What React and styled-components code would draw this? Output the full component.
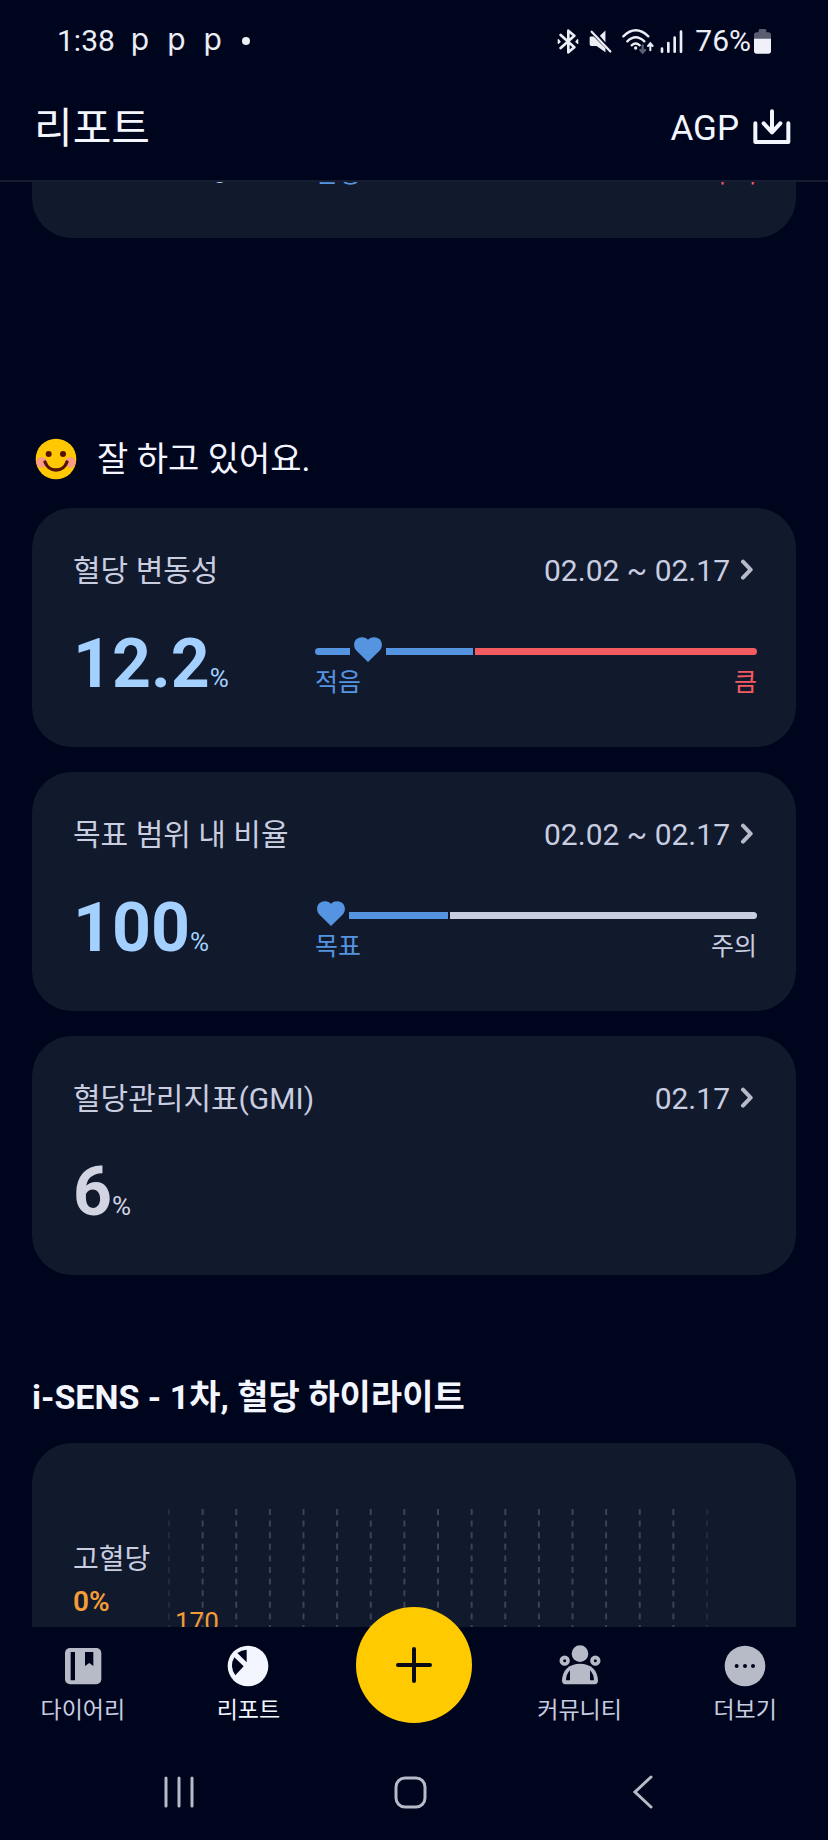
import React, { useLayoutEffect, useRef } from "react";
import styled, { createGlobalStyle } from "styled-components";

const colors = {
	page: "#00051e",
	card: "#11192c",
	line: "#161d30",
	white: "#f4f6ff",
	text: "#c9cde0",
	muted: "#b7bac7",
	blue: "#5594e0",
	sky: "#a3d0ff",
	red: "#f45b60",
	orange: "#f39c38",
	yellow: "#ffcb00",
};

const average = {
	value: "100",
	unit: "mg/dL",
	good: true,
	range: { before: 62, after: 60, rest: 282, low: "안정", high: "주의", tone: colors.red },
};

const metrics = [
	{
		title: "혈당 변동성",
		date: "02.02 ~ 02.17",
		value: "12.2",
		unit: "%",
		good: true,
		range: { before: 35, after: 87, rest: 282, low: "적음", high: "큼", tone: colors.red },
	},
	{
		title: "목표 범위 내 비율",
		date: "02.02 ~ 02.17",
		value: "100",
		unit: "%",
		good: true,
		range: { before: 0, after: 99, rest: 309, low: "목표", high: "주의", tone: colors.text },
	},
	{ title: "혈당관리지표(GMI)", date: "02.17", value: "6", unit: "%" },
];

const GRID_LINES = 17;

function StatusIcons() {
	return (
		<>
			<svg width="22" height="25" viewBox="0 0 66 75" fill="none" stroke="#eceef6" strokeWidth="8" strokeLinejoin="round" strokeLinecap="round">
				<path d="M11 18 52 55 34 70V5L52 20 11 57" />
				<path d="M4 32v11l5-5zM62 32v11l-5-5z" strokeWidth="4" fill="#eceef6" />
			</svg>
			<svg width="23" height="25" viewBox="0 0 70 75" fill="#eceef6">
				<path d="M33 20 50 4v36zM4 22h10l36 36v12L23 51H7q-5 0-5-5V27q0-4 2-5z" />
				<path d="M8 8 65 68" stroke="#eceef6" strokeWidth="7" strokeLinecap="round" />
			</svg>
			<svg width="61" height="25" viewBox="0 0 183 75" fill="none" stroke="#eceef6" strokeWidth="7" strokeLinecap="round">
				<path d="M4 22Q41-14 79 22M16 37Q41 12 67 37M29 49q12-11 24 0" />
				<circle cx="41" cy="57" r="5" fill="#eceef6" stroke="none" />
				<path d="M62 49v21m-7-7 7 8 7-8" stroke="#5a5e72" />
				<path d="M85 64V44m-7 7 7-8 7 8" strokeWidth="6" />
				<path d="M120 59v9M139 42v26M158 26v42M177 8v60" strokeWidth="8" />
			</svg>
		</>
	);
}

function Battery() {
	return (
		<svg width="17" height="25" viewBox="0 0 51 75">
			<path d="M14 10V4q0-4 4-4h15q4 0 4 4v6h6q8 0 8 8v12H0V18q0-8 8-8z" fill="#5a5d70" />
			<path d="M0 29h51v37q0 8-8 8H8q-8 0-8-8z" fill="#f0f1f8" />
		</svg>
	);
}

function DownloadIcon() {
	return (
		<svg width="38" height="38" viewBox="0 0 114 114" fill="none" stroke={colors.white} strokeWidth="12" strokeLinecap="round" strokeLinejoin="round">
			<path d="M7 43v56h99V43M57 7v62M32 43l25 27 25-27" />
		</svg>
	);
}

function Smile() {
	return (
		<svg width="42" height="42" viewBox="0 0 126 126">
			<clipPath id="face">
				<circle cx="63" cy="63" r="61" />
			</clipPath>
			<g clipPath="url(#face)">
				<rect width="126" height="126" fill="#ffc803" />
				<circle cx="20" cy="73" r="16" fill="#fb9a86" />
				<circle cx="106" cy="73" r="16" fill="#fb9a86" />
			</g>
			<circle cx="41" cy="48" r="9" fill="#551309" />
			<circle cx="84" cy="48" r="9" fill="#551309" />
			<path d="M30 72c12 32 54 32 66 0" fill="none" stroke="#551309" strokeWidth="10" strokeLinecap="round" />
		</svg>
	);
}

function Chevron() {
	return (
		<svg width="14" height="24" viewBox="0 0 42 72" fill="none" stroke={colors.muted} strokeWidth="12" strokeLinecap="round" strokeLinejoin="round">
			<path d="M9 8 32 32 9 56" />
		</svg>
	);
}

function RangeBar({ before, after, rest, low, high, tone }) {
	return (
		<Range>
			<Track>
				{before > 0 && <Segment $size={before} $tone={colors.blue} $first />}
				<Heart viewBox="0 0 86 88">
					<path d="M43 76 7 41C-6 27 0 0 24 0c10 0 16 4 19 8 3-4 9-8 19-8 24 0 30 27 17 41z" fill={colors.blue} />
				</Heart>
				<Segment $size={after} $tone={colors.blue} />
				<Segment $size={rest} $tone={tone} $last />
			</Track>
			<RangeLabels>
				<RangeLabel $tone={colors.blue}>{low}</RangeLabel>
				<RangeLabel $tone={tone}>{high}</RangeLabel>
			</RangeLabels>
		</Range>
	);
}

function MetricCard({ title, date, value, unit, good, range }) {
	return (
		<Card>
			{title && (
				<CardHead>
					<CardTitle>{title}</CardTitle>
					<DateButton type="button">
						{date}
						<Chevron />
					</DateButton>
				</CardHead>
			)}
			<CardBody>
				<Value $good={good}>
					{value}
					<Unit>{unit}</Unit>
				</Value>
				{range && <RangeBar {...range} />}
			</CardBody>
		</Card>
	);
}

function HighlightChart() {
	const lines = [];
	for (let i = 0; i < GRID_LINES; i++) {
		lines.push(`${(i * 100) / (GRID_LINES - 1)}%`);
	}

	return (
		<Chart>
			{lines.map((x, i) => (
				<line
					key={x}
					x1={x}
					x2={x}
					y1="0"
					y2="100%"
					stroke="#3c4354"
					strokeWidth="2"
					strokeDasharray="6 5.6"
					opacity={i === 0 || i === GRID_LINES - 1 ? 0.4 : 1}
				/>
			))}
			<ChartLabel x="6" y="122">
				170
			</ChartLabel>
		</Chart>
	);
}

function DiaryIcon() {
	return (
		<svg width="42" height="42" viewBox="0 0 126 126" fill={colors.muted}>
			<rect x="9" y="9" width="109" height="109" rx="15" />
			<path d="M26 21h13v85H26zM69 21h25v42l-12-9-13 9z" fill={colors.page} />
		</svg>
	);
}

function ReportIcon() {
	return (
		<svg width="42" height="42" viewBox="0 0 126 126" fill={colors.white}>
			<circle cx="63" cy="63" r="61" />
			<path d="M59 14v38L31 24q12-9 28-10zM22 37l28 27-25 27Q6 64 22 37z" fill={colors.page} />
		</svg>
	);
}

function CommunityIcon() {
	return (
		<svg width="42" height="42" viewBox="0 0 126 126" fill={colors.muted}>
			<circle cx="63" cy="26" r="25" />
			<circle cx="17" cy="47" r="10" fill="none" stroke={colors.muted} strokeWidth="11" />
			<circle cx="109" cy="47" r="10" fill="none" stroke={colors.muted} strokeWidth="11" />
			<path d="M9 106c1-31 22-50 54-50s53 19 54 50q0 12-10 12H19q-10 0-10-12z" />
			<path d="M33 76q-12 12-12 30h12zM93 76q12 12 12 30H93z" fill={colors.page} />
		</svg>
	);
}

function MoreIcon() {
	return (
		<svg width="42" height="42" viewBox="0 0 126 126" fill={colors.muted}>
			<circle cx="63" cy="63" r="61" />
			<g fill={colors.page}>
				<circle cx="38" cy="63" r="6" />
				<circle cx="63" cy="63" r="6" />
				<circle cx="87" cy="63" r="6" />
			</g>
		</svg>
	);
}

function App() {
	const scroller = useRef(null);

	useLayoutEffect(() => {
		scroller.current.scrollTop = 111;
	}, []);

	return (
		<Screen>
			<GlobalStyle />
			<StatusBar>
				<StatusGroup>
					<span>1:38</span>
					<Notices>
						<span>p</span>
						<span>p</span>
						<span>p</span>
					</Notices>
					<Dot />
				</StatusGroup>
				<StatusGroup>
					<StatusSymbols>
						<StatusIcons />
					</StatusSymbols>
					<BatteryLevel>
						76%
						<Battery />
					</BatteryLevel>
				</StatusGroup>
			</StatusBar>

			<Header>
				<PageTitle>리포트</PageTitle>
				<AgpButton type="button">
					AGP
					<DownloadIcon />
				</AgpButton>
			</Header>

			<Content ref={scroller}>
				<MetricCard {...average} />

				<Praise>
					<Smile />
					잘 하고 있어요.
				</Praise>
				<CardList>
					{metrics.map((metric) => (
						<MetricCard key={metric.title} {...metric} />
					))}
				</CardList>

				<HighlightTitle>i-SENS - 1차, 혈당 하이라이트</HighlightTitle>
				<HighlightCard>
					<Level>
						<span>고혈당</span>
						<LevelValue>0%</LevelValue>
					</Level>
					<HighlightChart />
				</HighlightCard>
			</Content>

			<TabBar>
				<Tab href="#diary">
					<DiaryIcon />
					다이어리
				</Tab>
				<Tab href="#report" $active>
					<ReportIcon />
					리포트
				</Tab>
				<AddButton type="button" aria-label="추가">
					<svg width="38" height="38" viewBox="0 0 38 38" stroke="#080a14" strokeWidth="4" strokeLinecap="round">
						<path d="M19 3v32M3 19h32" />
					</svg>
				</AddButton>
				<Tab href="#community">
					<CommunityIcon />
					커뮤니티
				</Tab>
				<Tab href="#more">
					<MoreIcon />
					더보기
				</Tab>
			</TabBar>

			<SystemBar>
				<SystemButton type="button" aria-label="최근 앱">
					<svg width="34" height="34" viewBox="0 0 34 34">
						<path d="M5 3v28M18 3v28M31 3v28" />
					</svg>
				</SystemButton>
				<SystemButton type="button" aria-label="홈">
					<svg width="34" height="34" viewBox="0 0 34 34">
						<rect x="3" y="3" width="29" height="29" rx="9" />
					</svg>
				</SystemButton>
				<SystemButton type="button" aria-label="뒤로">
					<svg width="34" height="34" viewBox="0 0 34 34">
						<path d="M25 2 9 17l16 15" />
					</svg>
				</SystemButton>
			</SystemBar>
		</Screen>
	);
}

export default App;

const GlobalStyle = createGlobalStyle`
	* {
		box-sizing: border-box;
	}

	body {
		margin: 0;
		background: ${colors.page};
		color: ${colors.text};
		font-family: Roboto, "Noto Sans CJK KR", sans-serif;
	}

	button {
		padding: 0;
		border: none;
		background: none;
		color: inherit;
		font: inherit;
		cursor: pointer;
	}

	svg {
		display: block;
		flex: none;
	}
`;

const Screen = styled.div`
	display: flex;
	flex-direction: column;
	height: 100vh;
	background: ${colors.page};
`;

const StatusBar = styled.div`
	display: flex;
	justify-content: space-between;
	padding: 20px 57px 16px;
	font-size: 30px;
	line-height: 42px;
	color: #eceef6;
`;

const StatusGroup = styled.div`
	display: flex;
	align-items: center;
`;

const Notices = styled.div`
	display: flex;
	gap: 18px;
	margin-left: 16px;
	padding-bottom: 5px;
	font-family: Inter, sans-serif;
	line-height: 36px;
`;

const Dot = styled.i`
	width: 8px;
	height: 8px;
	margin-left: 20px;
	border-radius: 50%;
	background: #eceef6;
`;

const StatusSymbols = styled.div`
	display: flex;
	gap: 10px;
	margin-right: 12px;
`;

const BatteryLevel = styled.div`
	display: flex;
	align-items: center;
	gap: 3px;
`;

const Header = styled.header`
	display: flex;
	align-items: center;
	justify-content: space-between;
	height: 104px;
	padding: 0 37px 2px 34px;
	border-bottom: 2px solid ${colors.line};
	color: ${colors.white};
`;

const PageTitle = styled.h1`
	margin: 0;
	padding-top: 2px;
	font-size: 42px;
	font-weight: 400;
	line-height: 48px;
`;

const AgpButton = styled.button`
	display: flex;
	align-items: center;
	gap: 14px;
	&& {
		font-size: 35px;
	}
`;

const Content = styled.main`
	flex: 1;
	min-height: 0;
	padding: 0 32px;
	overflow-y: auto;
	scrollbar-width: none;
`;

const Card = styled.section`
	padding: 43px 39px 42px 41px;
	border-radius: 40px;
	background: ${colors.card};
`;

const CardHead = styled.div`
	display: flex;
	align-items: center;
	justify-content: space-between;
	margin-bottom: 32px;
	font-size: 30px;
	line-height: 40px;
`;

const CardTitle = styled.h3`
	margin: 0;
	font-size: inherit;
	font-weight: 400;
`;

const DateButton = styled.button`
	display: flex;
	align-items: center;
	gap: 10px;
	padding-right: 3px;
`;

const CardBody = styled.div`
	display: grid;
	grid-template-columns: 242px 1fr;
	align-items: end;
`;

const Value = styled.p`
	margin: 0;
	font-size: 68px;
	font-weight: 700;
	line-height: 82px;
	color: ${(props) => (props.$good ? colors.sky : "#d2d4e2")};
`;

const Unit = styled.span`
	font-size: 26px;
	font-weight: 400;
	line-height: 32px;
`;

const Range = styled.div`
	display: flex;
	flex-direction: column;
	gap: 1px;
	padding-bottom: 6px;
`;

const Track = styled.div`
	display: flex;
	align-items: center;
	gap: 2px;
	height: 29px;
`;

const Segment = styled.i`
	flex: ${(props) => props.$size} 1 0;
	height: 7px;
	background: ${(props) => props.$tone};
	border-radius: ${(props) => (props.$first ? "4px 0 0 4px" : props.$last ? "0 4px 4px 0" : "0")};
`;

const Heart = styled.svg`
	width: 32px;
	height: 29px;
	padding: 0 2px;
`;

const RangeLabels = styled.div`
	display: flex;
	justify-content: space-between;
	font-size: 25px;
	line-height: 32px;
`;

const RangeLabel = styled.span`
	color: ${(props) => props.$tone};
`;

const Praise = styled.h2`
	display: flex;
	align-items: center;
	gap: 20px;
	margin: 197px 0 25px 3px;
	font-size: 34px;
	font-weight: 400;
	line-height: 48px;
	color: ${colors.white};
`;

const CardList = styled.div`
	display: flex;
	flex-direction: column;
	gap: 25px;
`;

const HighlightTitle = styled.h2`
	margin: 98px 0 22px;
	font-size: 34px;
	font-weight: 700;
	line-height: 48px;
	color: ${colors.white};
`;

const HighlightCard = styled.section`
	display: flex;
	padding: 66px 89px 66px 41px;
	border-radius: 40px;
	background: ${colors.card};
`;

const Level = styled.div`
	display: flex;
	flex-direction: column;
	gap: 2px;
	width: 96px;
	padding-top: 31px;
	font-size: 28px;
	line-height: 40px;
	white-space: nowrap;
`;

const LevelValue = styled.strong`
	font-weight: 600;
	color: ${colors.orange};
`;

const Chart = styled.svg`
	flex: 1;
	width: 0;
	height: 420px;
	overflow: visible;
`;

const ChartLabel = styled.text`
	font-size: 26px;
	fill: ${colors.orange};
`;

const TabBar = styled.nav`
	display: grid;
	grid-template-columns: repeat(5, 1fr);
	justify-items: center;
	height: 118px;
`;

const Tab = styled.a`
	display: flex;
	flex-direction: column;
	align-items: center;
	gap: 8px;
	padding-top: 18px;
	font-size: 23px;
	line-height: 32px;
	text-decoration: none;
	color: ${(props) => (props.$active ? colors.white : colors.text)};
`;

const AddButton = styled.button`
	position: relative;
	display: flex;
	align-items: center;
	justify-content: center;
	width: 116px;
	height: 116px;
	margin-top: -20px;
	&& {
		border-radius: 50%;
		background: ${colors.yellow};
	}
`;

const SystemBar = styled.div`
	display: grid;
	grid-template-columns: repeat(3, 1fr);
	align-items: center;
	height: 95px;
	padding: 0 69px 2px 62px;
`;

const SystemButton = styled.button`
	display: flex;
	justify-content: center;

	svg {
		fill: none;
		stroke: ${colors.muted};
		stroke-width: 3;
		stroke-linecap: round;
	}
`;
